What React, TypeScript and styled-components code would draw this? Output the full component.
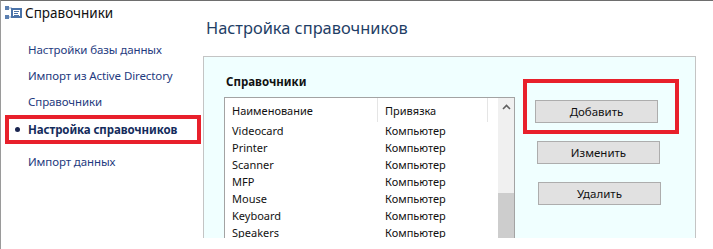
import React from "react";
import styled, { createGlobalStyle } from "styled-components";

const Global = createGlobalStyle`
  html, body { margin: 0; padding: 0; background: #ffffff; }
  body { font-family: "Noto Sans", "Open Sans", sans-serif; }
  * { box-sizing: border-box; }
`;

const Window = styled.div`
  width: 713px;
  height: 249px;
  display: flex;
  border-top: 1px solid #6e6e6e;
  border-left: 1px solid #9a9a9a;
  overflow: hidden;
  background: #ffffff;
`;

const Sidebar = styled.div`
  width: 202px;
  flex: none;
  display: flex;
  flex-direction: column;
`;

const SideHeader = styled.div`
  display: flex;
  align-items: center;
  gap: 2px;
  height: 24px;
  padding-left: 4px;
  font-size: 13.5px;
  color: #111;
`;

const NavList = styled.div`
  display: flex;
  flex-direction: column;
  margin-top: 11px;
`;

const NavItem = styled.div<{ $active?: boolean; $gap?: number }>`
  height: ${(p) => (p.$active ? 29 : 26)}px;
  display: flex;
  align-items: center;
  margin-top: ${(p) => p.$gap ?? 0}px;
  margin-left: ${(p) => (p.$active ? 4 : 0)}px;
  margin-right: ${(p) => (p.$active ? 2 : 0)}px;
  padding-left: ${(p) => (p.$active ? 6 : 27)}px;
  border: ${(p) => (p.$active ? "4px solid #e8202b" : "none")};
  font-size: 11.5px;
  letter-spacing: -0.1px;
  font-weight: ${(p) => (p.$active ? 700 : 400)};
  color: ${(p) => (p.$active ? "#152c5c" : "#1f3b80")};
  white-space: nowrap;
`;

const Bullet = styled.span`
  width: 5px;
  height: 5px;
  border-radius: 50%;
  background: #1a2550;
  margin-right: 8px;
  margin-top: -1px;
`;

const Main = styled.div`
  flex: 1;
  display: flex;
  flex-direction: column;
`;

const Title = styled.div`
  height: 55px;
  padding: 15px 0 0 3px;
  font-size: 16.4px;
  color: #1f3e66;
  white-space: nowrap;
`;

const Panel = styled.div`
  width: 493px;
  height: 182px;
  border: 1px solid #c4c4c4;
  border-bottom: none;
  background: #f0ffff;
  display: flex;
  overflow: hidden;
`;

const ListColumn = styled.div`
  display: flex;
  flex-direction: column;
  padding: 17px 0 0 20px;
`;

const Label = styled.div`
  height: 16px;
  line-height: 16px;
  font-size: 11.5px;
  font-weight: 700;
  color: #111;
  padding-left: 2px;
  margin-bottom: 7px;
`;

const ListBox = styled.div`
  width: 291px;
  height: 200px;
  border: 1px solid #a3a3a3;
  background: #ffffff;
  display: flex;
`;

const Rows = styled.div`
  flex: 1;
  display: flex;
  flex-direction: column;
`;

const HeaderRow = styled.div`
  height: 24px;
  display: grid;
  grid-template-columns: 153px 110px 1fr;
  font-size: 11px;
  color: #111;
`;

const HeadCell = styled.div<{ $sep?: boolean }>`
  display: flex;
  align-items: center;
  padding-left: 7px;
  border-right: ${(p) => (p.$sep ? "1px solid #e5e5e5" : "none")};
`;

const Row = styled.div`
  height: 17px;
  display: grid;
  grid-template-columns: 153px 110px 1fr;
  align-items: center;
  font-size: 11px;
  color: #111;
`;

const Cell = styled.div`
  padding-left: 7px;
  white-space: nowrap;
`;

const ScrollBar = styled.div`
  width: 16px;
  flex: none;
  background: #f0f0f0;
  display: flex;
  flex-direction: column;
  align-items: center;
`;

const ArrowBtn = styled.div`
  height: 17px;
  display: flex;
  align-items: center;
  justify-content: center;
`;

const Thumb = styled.div`
  width: 16px;
  height: 80px;
  margin-top: 78px;
  background: #cdcdcd;
`;

const ButtonColumn = styled.div`
  display: flex;
  flex-direction: column;
  align-items: flex-start;
  padding: 22px 0 0 8px;
`;

const Highlight = styled.div`
  border: 4px solid #e8202b;
  padding: 17px 17px 7px 8px;
`;

const Button = styled.div<{ $shift?: number; $gap?: number }>`
  width: 123px;
  height: 23px;
  margin-left: ${(p) => p.$shift ?? 0}px;
  margin-top: ${(p) => p.$gap ?? 0}px;
  background: #e1e1e1;
  border: 1px solid #adadad;
  display: flex;
  align-items: center;
  justify-content: center;
  font-size: 11.5px;
  color: #111;
`;

const rows = ["Videocard", "Printer", "Scanner", "MFP", "Mouse", "Keyboard", "Speakers"];

const BookIcon = () => (
  <svg width="18" height="16" viewBox="0 0 18 16">
    <rect x="0" y="1" width="4" height="4" fill="#5b7fb0" />
    <rect x="0" y="10" width="4" height="4" fill="#5b7fb0" />
    <rect x="4" y="2.5" width="3" height="1" fill="#8aa4c8" />
    <rect x="4" y="11.5" width="3" height="1" fill="#8aa4c8" />
    <rect x="6" y="3" width="11" height="10" fill="#4a72a8" />
    <rect x="8" y="5" width="7" height="6" fill="#ffffff" />
    <rect x="9" y="6" width="5" height="1" fill="#4a72a8" />
    <rect x="9" y="8" width="4" height="1" fill="#4a72a8" />
    <rect x="9" y="10" width="5" height="1" fill="#4a72a8" />
  </svg>
);

const Chevron = () => (
  <svg width="9" height="6" viewBox="0 0 9 6">
    <path d="M1 5 L4.5 1.5 L8 5" fill="none" stroke="#606060" strokeWidth="1.6" />
  </svg>
);

export default function App() {
  return (
    <>
      <Global />
      <Window>
        <Sidebar>
          <SideHeader>
            <BookIcon />
            <span>Справочники</span>
          </SideHeader>
          <NavList>
            <NavItem>Настройки базы данных</NavItem>
            <NavItem>Импорт из Active Directory</NavItem>
            <NavItem>Справочники</NavItem>
            <NavItem $active $gap={1}>
              <Bullet />
              Настройка справочников
            </NavItem>
            <NavItem $gap={4}>Импорт данных</NavItem>
          </NavList>
        </Sidebar>
        <Main>
          <Title>Настройка справочников</Title>
          <Panel>
            <ListColumn>
              <Label>Справочники</Label>
              <ListBox>
                <Rows>
                  <HeaderRow>
                    <HeadCell $sep>Наименование</HeadCell>
                    <HeadCell $sep>Привязка</HeadCell>
                    <HeadCell />
                  </HeaderRow>
                  {rows.map((r) => (
                    <Row key={r}>
                      <Cell>{r}</Cell>
                      <Cell>Компьютер</Cell>
                      <Cell />
                    </Row>
                  ))}
                </Rows>
                <ScrollBar>
                  <ArrowBtn>
                    <Chevron />
                  </ArrowBtn>
                  <Thumb />
                </ScrollBar>
              </ListBox>
            </ListColumn>
            <ButtonColumn>
              <Highlight>
                <Button>Добавить</Button>
              </Highlight>
              <Button $shift={14} $gap={7}>Изменить</Button>
              <Button $shift={15} $gap={18}>Удалить</Button>
            </ButtonColumn>
          </Panel>
        </Main>
      </Window>
    </>
  );
}
